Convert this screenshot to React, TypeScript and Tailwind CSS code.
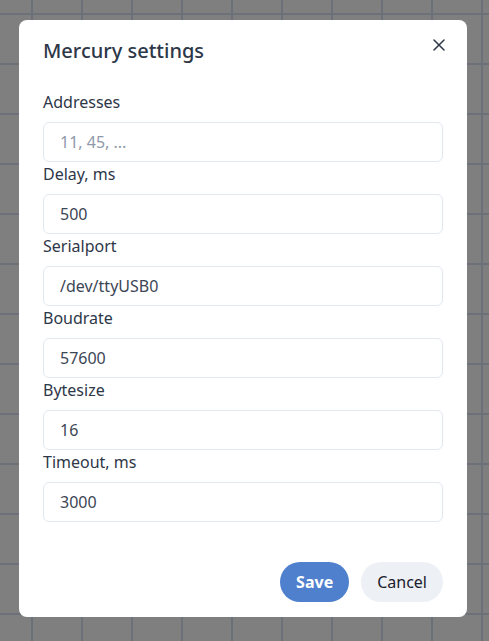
import React from 'react';

const fields = [
  { label: 'Addresses', value: '', placeholder: '11, 45, ...' },
  { label: 'Delay, ms', value: '500' },
  { label: 'Serialport', value: '/dev/ttyUSB0' },
  { label: 'Boudrate', value: '57600' },
  { label: 'Bytesize', value: '16' },
  { label: 'Timeout, ms', value: '3000' },
];

const App: React.FC = () => {
  return (
    <div
      className="w-[489px] h-[641px] overflow-hidden pl-[19px] pt-[20px] bg-[#7f7f7f] bg-[linear-gradient(to_right,#6c7179_2px,transparent_2px),linear-gradient(to_bottom,#6c7179_2px,transparent_2px)] bg-[size:50px_50px] bg-[position:31px_13px]"
      style={{ fontFamily: '"Noto Sans", "Open Sans", sans-serif' }}
    >
      <div className="w-[448px] h-[597px] bg-white rounded-lg px-6 pt-[17px] pb-[15px] flex flex-col">
        <div className="flex items-center justify-between h-7">
          <h2 className="text-xl leading-7 font-medium text-[#2d3748]">Mercury settings</h2>
          <button className="w-3 h-3 -mr-[2px] -mt-[12px] flex items-center justify-center text-[#2d3748]">
            <svg width="12" height="12" viewBox="0 0 12 12" fill="none" stroke="currentColor" strokeWidth="1.5" strokeLinecap="round">
              <path d="M1 1L11 11M11 1L1 11" />
            </svg>
          </button>
        </div>

        <div className="mt-[25px] flex flex-col">
          {fields.map((f) => (
            <div key={f.label}>
              <label className="block text-base leading-6 font-[450] text-[#2d3748] mb-2">{f.label}</label>
              <input
                className="block w-[400px] h-10 px-4 rounded-md border border-[#e2e8f0] text-base font-normal text-[#3d4656] placeholder:text-[#8f99aa] outline-none"
                defaultValue={f.value}
                placeholder={f.placeholder}
              />
            </div>
          ))}
        </div>

        <div className="mt-10 flex justify-end gap-3">
          <button className="h-10 px-4 rounded-full bg-[#4f80cd] text-white font-bold text-base">Save</button>
          <button className="h-10 px-4 rounded-full bg-[#edf0f5] text-[#1a202c] text-base">Cancel</button>
        </div>
      </div>
    </div>
  );
};

export default App;
